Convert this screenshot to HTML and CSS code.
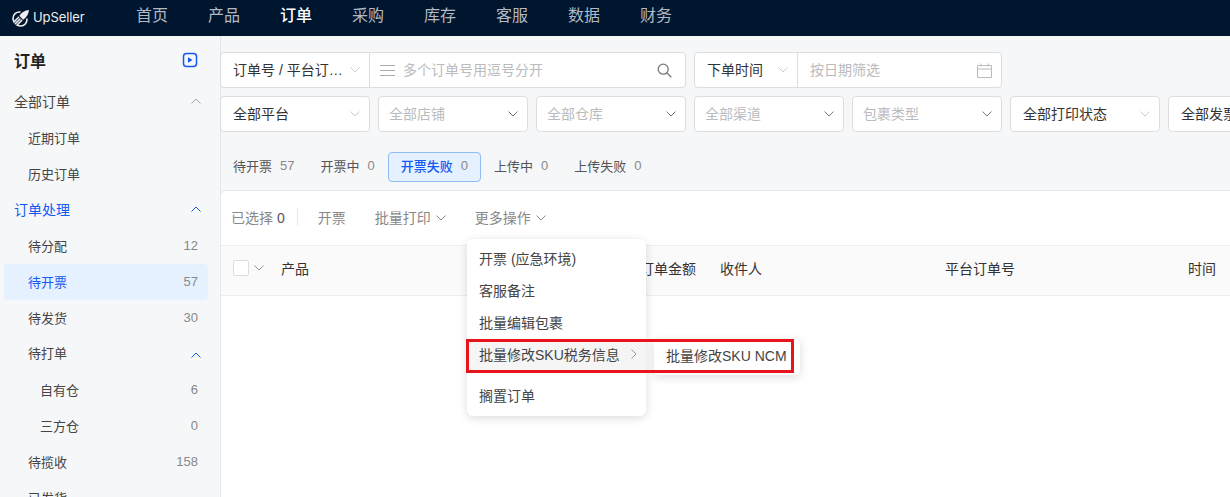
FILE: index.html
```html
<!DOCTYPE html>
<html lang="zh-CN">
<head>
<meta charset="utf-8">
<title>UpSeller 订单</title>
<link rel="stylesheet" href="styles.css">
</head>
<body>
<header class="topbar">
  <div class="logo">
    <svg class="logo-mark" width="18" height="18" viewBox="0 0 18 18" fill="none">
      <path d="M17 1C12.800 1.400 9.500 3.400 7.300 6.800L11.200 10.700C14.600 8.500 16.600 5.200 17 1Z" fill="#eee"/>
      <path d="M8 3C4.200 2.800 1 5.600 1 9.300C1 10.700 1.400 11.900 2 12.900L6.600 8.300M15 10C15.200 13.800 12.400 17 8.700 17C7.300 17 6.100 16.600 5.100 16L9.700 11.400M3.400 14.600L8 10" stroke="#eee" stroke-width="1.600" stroke-linecap="round"/>
    </svg>
    <span class="logo-text">UpSeller</span>
  </div>
  <nav class="nav">
    <a class="nav-item">首页</a>
    <a class="nav-item">产品</a>
    <a class="nav-item is-current">订单</a>
    <a class="nav-item">采购</a>
    <a class="nav-item">库存</a>
    <a class="nav-item">客服</a>
    <a class="nav-item">数据</a>
    <a class="nav-item">财务</a>
  </nav>
</header>

<div class="body-wrap">
  <aside class="sidebar">
    <div class="side-title">
      <span>订单</span>
      <svg class="play" width="16" height="16" viewBox="0 0 16 16" fill="none">
        <rect x="1.500" y="1.500" width="13" height="13" rx="3" stroke="#1459f5" stroke-width="1.500"/>
        <path d="M6 5.200L10.500 8L6 10.800Z" fill="#1459f5"/>
      </svg>
    </div>
    <div class="side-group">全部订单<svg class="chev" width="10" height="6" viewBox="0 0 10 6" fill="none"><path d="M.5 5.500L5 1L9.500 5.500" stroke="#aaa"/></svg></div>
    <div class="side-item">近期订单</div>
    <div class="side-item">历史订单</div>
    <div class="side-group is-blue">订单处理<svg class="chev" width="10" height="6" viewBox="0 0 10 6" fill="none"><path d="M.5 5.500L5 1L9.500 5.500" stroke="#1459f5"/></svg></div>
    <div class="side-item">待分配<span class="num">12</span></div>
    <div class="side-item is-active">待开票<span class="num">57</span></div>
    <div class="side-item">待发货<span class="num">30</span></div>
    <div class="side-item is-parent">待打单<svg class="chev chev-low" width="10" height="6" viewBox="0 0 10 6" fill="none"><path d="M.5 5.500L5 1L9.500 5.500" stroke="#1459f5"/></svg></div>
    <div class="side-item is-sub">自有仓<span class="num">6</span></div>
    <div class="side-item is-sub">三方仓<span class="num">0</span></div>
    <div class="side-item">待揽收<span class="num">158</span></div>
    <div class="side-item">已发货</div>
  </aside>

  <main class="main">
    <div class="filters">
      <div class="row">
        <div class="field w-466">
          <div class="part part-select">
            <span class="val ellip">订单号 / 平台订…</span>
            <svg class="down faint" width="10" height="6" viewBox="0 0 10 6" fill="none"><path d="M.5.500L5 5L9.500.500"/></svg>
          </div>
          <div class="part part-grow part-search">
            <svg class="lines" width="15" height="11" viewBox="0 0 15 11" fill="none"><path d="M0 .500H15M0 5.500H15M0 10.500H15" stroke="#aaa"/></svg>
            <span class="ph">多个订单号用逗号分开</span>
            <svg class="search" width="15" height="15" viewBox="0 0 15 15" fill="none"><circle cx="6.200" cy="6.200" r="5" stroke="#777" stroke-width="1.300"/><path d="M9.800 9.800L14.300 14.300" stroke="#777" stroke-width="1.300"/></svg>
          </div>
        </div>
        <div class="field w-308">
          <div class="part part-time">
            <span class="val">下单时间</span>
            <svg class="down faint" width="10" height="6" viewBox="0 0 10 6" fill="none"><path d="M.5.500L5 5L9.500.500"/></svg>
          </div>
          <div class="part part-grow part-date">
            <span class="ph">按日期筛选</span>
            <svg class="cal" width="15" height="15" viewBox="0 0 15 15" fill="none"><path d="M.5 2.500H14.500V14.500H.5ZM.5 6H14.500M4 .5V3.500M11 .5V3.500" stroke="#bbb"/></svg>
          </div>
        </div>
      </div>
      <div class="row">
        <div class="select"><span class="val">全部平台</span><svg class="down faint" width="10" height="6" viewBox="0 0 10 6" fill="none"><path d="M.5.500L5 5L9.500.500"/></svg></div>
        <div class="select is-empty"><span class="ph">全部店铺</span><svg class="down" width="10" height="6" viewBox="0 0 10 6" fill="none"><path d="M.5.500L5 5L9.500.500"/></svg></div>
        <div class="select is-empty"><span class="ph">全部仓库</span><svg class="down" width="10" height="6" viewBox="0 0 10 6" fill="none"><path d="M.5.500L5 5L9.500.500"/></svg></div>
        <div class="select is-empty"><span class="ph">全部渠道</span><svg class="down" width="10" height="6" viewBox="0 0 10 6" fill="none"><path d="M.5.500L5 5L9.500.500"/></svg></div>
        <div class="select is-empty"><span class="ph">包裹类型</span><svg class="down" width="10" height="6" viewBox="0 0 10 6" fill="none"><path d="M.5.500L5 5L9.500.500"/></svg></div>
        <div class="select"><span class="val">全部打印状态</span><svg class="down faint" width="10" height="6" viewBox="0 0 10 6" fill="none"><path d="M.5.500L5 5L9.500.500"/></svg></div>
        <div class="select"><span class="val">全部发票状态</span></div>
      </div>
    </div>

    <div class="tabs">
      <div class="tab">待开票<span class="count">57</span></div>
      <div class="tab">开票中<span class="count">0</span></div>
      <div class="tab is-on">开票失败<span class="count">0</span></div>
      <div class="tab">上传中<span class="count">0</span></div>
      <div class="tab">上传失败<span class="count">0</span></div>
    </div>

    <section class="card">
      <div class="toolbar">
        <span>已选择 <b class="sel-num">0</b></span>
        <i class="tool-sep"></i>
        <span class="tool">开票</span>
        <span class="tool tool-drop">批量打印<svg width="10" height="6" viewBox="0 0 10 6" fill="none"><path d="M.5.500L5 5L9.500.500" stroke="#888"/></svg></span>
        <span class="tool tool-drop">更多操作<svg width="10" height="6" viewBox="0 0 10 6" fill="none"><path d="M.5.500L5 5L9.500.500" stroke="#888"/></svg></span>
      </div>
      <div class="thead">
        <div class="th-check"><i class="check"></i><svg width="10" height="6" viewBox="0 0 10 6" fill="none"><path d="M.5.500L5 5L9.500.500" stroke="#999"/></svg></div>
        <div class="th-product">产品</div>
        <div class="th-amount">订单金额</div>
        <div class="th-buyer">收件人</div>
        <div class="th-no">平台订单号</div>
        <div class="th-time">时间</div>
      </div>

      <div class="menu">
        <div class="menu-item">开票 (应急环境)</div>
        <div class="menu-item">客服备注</div>
        <div class="menu-item">批量编辑包裹</div>
        <div class="menu-item is-hover">批量修改SKU税务信息<svg width="6" height="10" viewBox="0 0 6 10" fill="none"><path d="M.5.500L5 5L.5 9.500" stroke="#999"/></svg></div>
        <div class="menu-item menu-last">搁置订单</div>
      </div>
      <div class="submenu">批量修改SKU NCM</div>
      <div class="redbox"></div>
    </section>
  </main>
</div>
</body>
</html>
```

FILE: styles.css
```css
* { box-sizing: border-box; }
html, body { margin: 0; height: 497px; overflow: hidden; }
body {
  font-family: "Liberation Sans", "Noto Sans CJK SC", sans-serif;
  font-size: 14px;
  color: #333;
  background: #f6f7f9;
}
svg { display: block; flex: none; }

.topbar { height: 36px; background: #00152e; display: flex; align-items: center; }
.logo { width: 136px; padding-left: 12px; display: flex; align-items: center; gap: 3px; }
.logo-text { font-family: Inter, sans-serif; color: #eee; font-size: 13px; font-weight: 400; letter-spacing: -.1px; padding-bottom: 2px; }
.nav { display: flex; gap: 40px; padding-bottom: 4px; }
.nav-item { font-size: 16px; color: #b3b9c2; line-height: 30px; }
.nav-item.is-current { color: #fff; font-weight: 500; }

.body-wrap { display: flex; height: 461px; }
.sidebar { width: 221px; flex: none; border-right: 1px solid #e4e5e8; padding: 0 12px 0 4px; overflow: hidden; }
.side-title { height: 48px; padding: 0 10px 0 10px; display: flex; justify-content: space-between; align-items: center; font-size: 16px; font-weight: 700; color: #222; }
.side-group { height: 36px; padding: 0 7px 2px 10px; display: flex; justify-content: space-between; align-items: center; color: #444; }
.side-group.is-blue { color: #1459f5; }
.side-item { height: 36px; padding: 0 10px 2px 24px; display: flex; justify-content: space-between; align-items: center; font-size: 13px; color: #444; border-radius: 4px; }
.side-item.is-active { background: #e6f1ff; color: #1459f5; }
.side-item.is-parent { padding-bottom: 4px; }
.side-item.is-sub { padding-left: 36px; }
.side-item .chev-low { margin-right: -3px; margin-top: 5px; }
.num { color: #888; font-size: 13px; }

.main { flex: 1; min-width: 0; overflow: hidden; padding-top: 16px; position: relative; margin-left: -1px; }
.filters { display: flex; flex-direction: column; gap: 8px; }
.row { display: flex; gap: 8px; }
.field, .select { height: 36px; background: #fff; border: 1px solid #ddd; border-radius: 4px; display: flex; align-items: center; flex: none; }
.w-466 { width: 466px; }
.w-308 { width: 308px; }
.part { height: 100%; display: flex; align-items: center; }
.part-select { width: 149px; padding: 0 9px 0 12px; justify-content: space-between; border-right: 1px solid #ddd; }
.part-time { width: 103px; padding: 0 9px 0 12px; justify-content: space-between; border-right: 1px solid #ddd; }
.part-grow { flex: 1; gap: 8px; }
.part-search { padding: 0 13px 0 10px; }
.part-date { padding: 0 9px 0 12px; }
.part-grow .search, .part-grow .cal { margin-left: auto; }
.val { color: #333; font-size: 14px; white-space: nowrap; padding-bottom: 2px; }
.ph { color: #bbb; font-size: 14px; white-space: nowrap; padding-bottom: 2px; }
.select { width: 150px; padding: 0 9px 0 12px; justify-content: space-between; }
.select.is-empty { padding-left: 10px; }
.down path { stroke: #777; }
.down.faint path { stroke: #ccc; }

.tabs { display: flex; margin-top: 20px; height: 30px; }
.tab { height: 30px; padding: 0 12px 3px; border: 1px solid transparent; border-radius: 4px; display: flex; align-items: center; font-size: 13px; color: #555; gap: 8px; }
.count { color: #888; font-size: 13px; }
.tab.is-on { background: #e6f1ff; border-color: #8fbcf5; color: #1459f5; font-weight: 500; }

.card { margin-top: 8px; height: 320px; background: #fff; border: 1px solid #e8e9ec; border-right: 0; border-radius: 6px 0 0 0; position: relative; }
.toolbar { height: 55px; padding: 0 11px 3px 10px; display: flex; align-items: center; color: #888; font-size: 14px; border-bottom: 1px solid #eee; }
.sel-num { font-weight: 400; color: #555; }
.tool-sep { width: 1px; height: 18px; background: #e8e8e8; margin: 0 20px 0 12px; }
.tool { color: #888; margin-right: 29px; }
.tool-drop { display: flex; align-items: center; gap: 5px; }
.tool-drop svg { margin-top: 3px; }
.thead { height: 50px; padding-bottom: 5px; background: #fafafa; border-bottom: 1px solid #eee; display: flex; align-items: center; color: #333; font-size: 14px; }
.th-check { width: 60px; padding-left: 12px; display: flex; align-items: center; gap: 5px; }
.check { width: 16px; height: 16px; background: #fff; border: 1px solid #ddd; border-radius: 2px; }
.th-product { width: 359px; }
.th-amount { width: 80px; }
.th-buyer { width: 225px; }
.th-no { width: 243px; }

.menu { position: absolute; left: 246px; top: 48px; width: 179px; padding: 4px 0; background: #fff; border-radius: 6px; box-shadow: 0 2px 10px rgba(0,0,0,.14); z-index: 2; }
.menu-item { height: 32px; padding: 0 12px 2px; display: flex; align-items: center; justify-content: space-between; color: #444; font-size: 14px; white-space: nowrap; }
.menu-item.is-hover { background: #f5f5f5; padding-right: 9px; }
.menu-last { margin-top: 9px; }
.submenu { position: absolute; left: 433px; top: 148px; width: 146px; height: 36px; padding: 0 12px 4px; display: flex; align-items: center; background: #fff; border-radius: 4px; box-shadow: 0 2px 10px rgba(0,0,0,.14); color: #444; font-size: 14px; white-space: nowrap; z-index: 2; }
.redbox { position: absolute; left: 245px; top: 148px; width: 328px; height: 34px; border: 3px solid #e8141c; z-index: 3; }
```
